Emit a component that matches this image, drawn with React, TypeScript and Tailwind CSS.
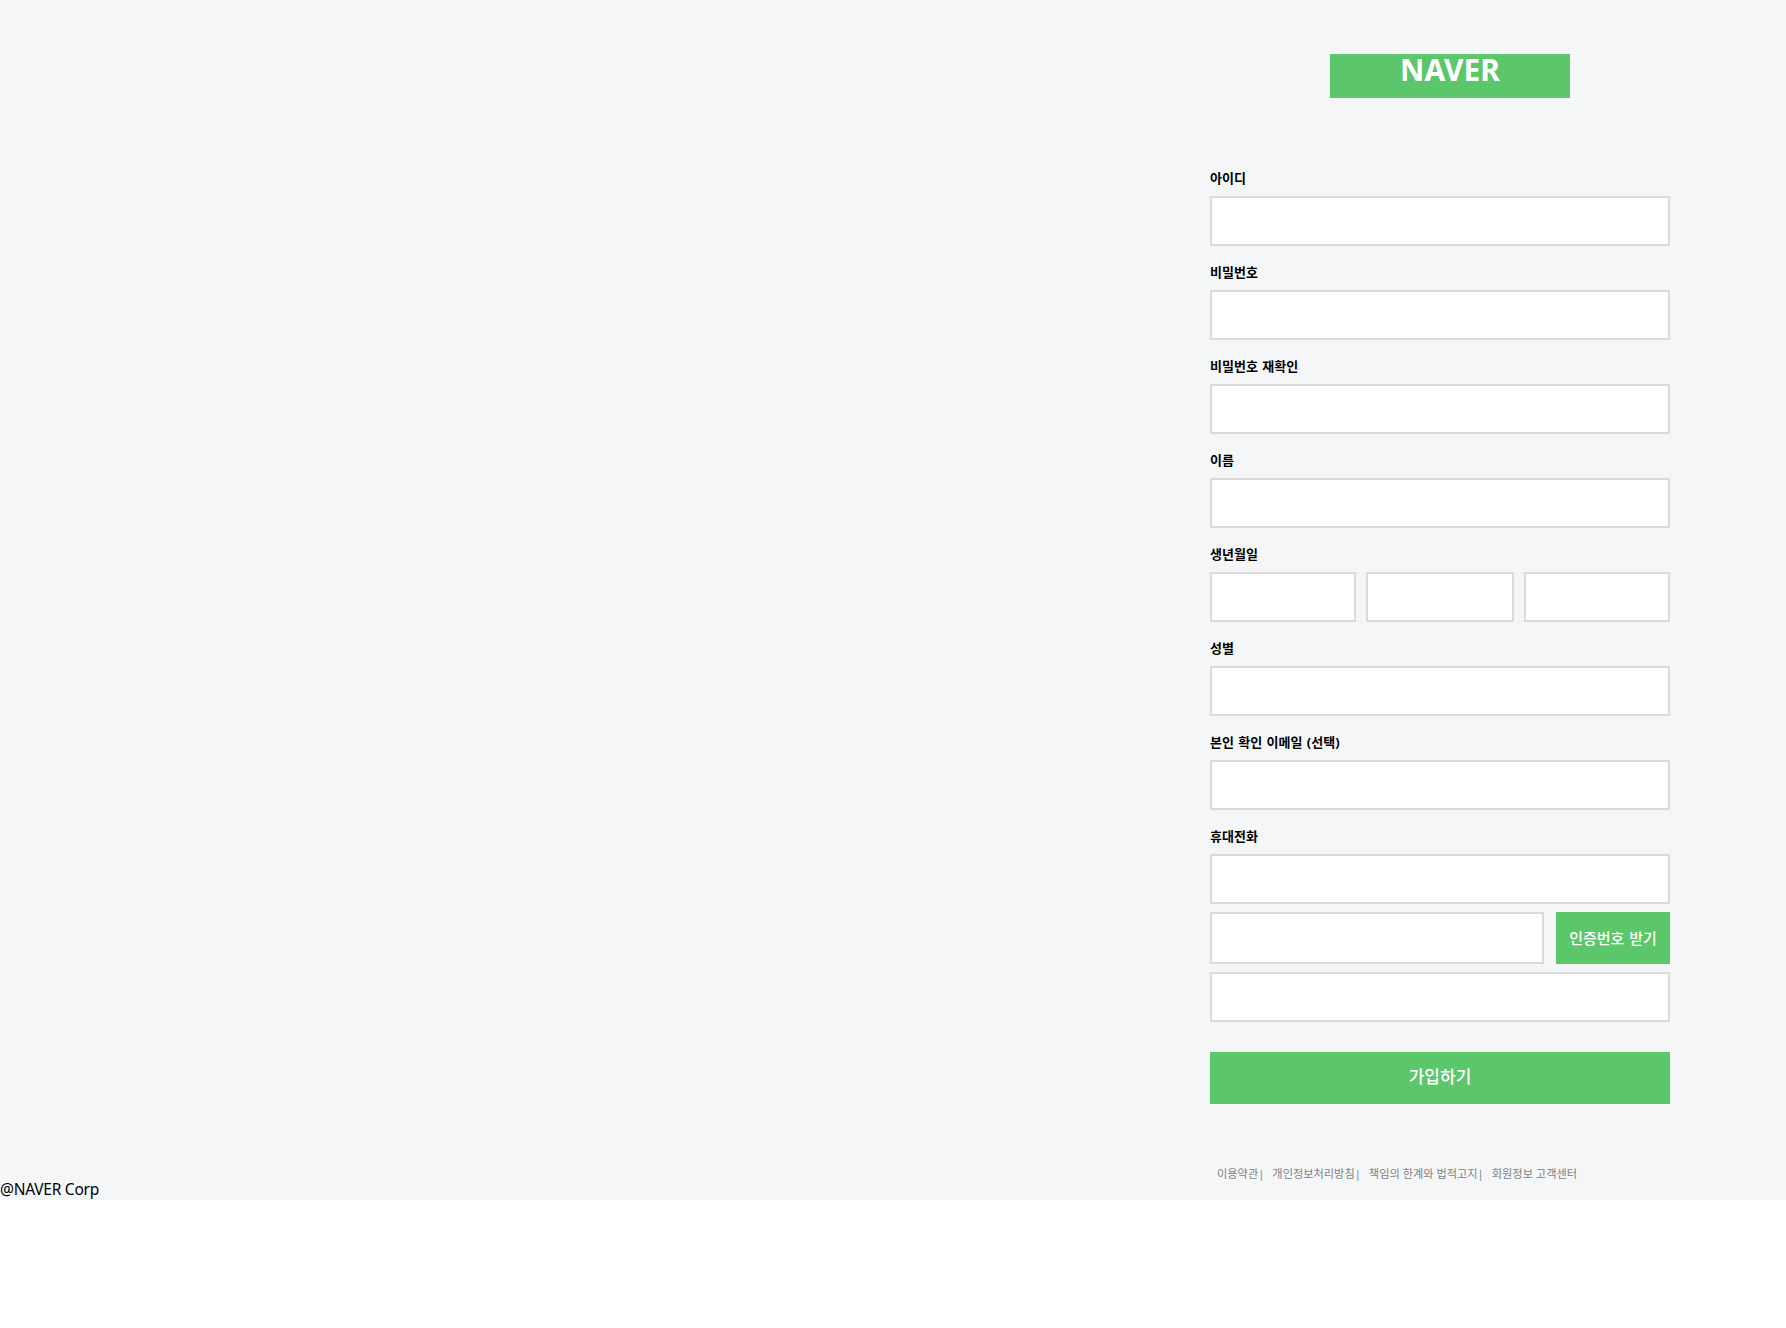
const fontClass = "font-['Noto_Sans','Noto_Sans_CJK_KR',sans-serif]"
const labelClass = 'block h-[36px] pt-[9px] text-[13px] leading-[18px] font-bold text-black [word-spacing:1px]'

function Field({ label }: { label: string }) {
  return (
    <div className="mb-[8px]">
      <label className={labelClass}>{label}</label>
      <TextInput className="w-full" />
    </div>
  )
}

function TextInput({ className = '' }: { className?: string }) {
  return <input className={`block h-[50px] min-w-0 border-2 border-[#dadada] bg-white ${className}`} />
}

const footerLinks = ['이용약관|', '개인정보처리방침|', '책임의 한계와 법적고지|', '회원정보 고객센터']

export default function App() {
  return (
    <div className={`flex h-[1200px] bg-[#f5f6f7] ${fontClass}`}>
      <div className="flex flex-1 flex-col justify-end">
        <p className="h-[22px] text-[15.5px] leading-[22px] tracking-[-0.25px] text-black">@NAVER Corp</p>
      </div>

      <div className="mr-[116px] w-[460px] pt-[54px]">
        <div className="ml-[120px] h-[44px] w-[240px] bg-[#5cc66a] text-center text-[30px] leading-[32px] font-bold text-white">
          NAVER
        </div>

        <form className="mt-[62px]" onSubmit={e => e.preventDefault()}>
          <Field label="아이디" />
          <Field label="비밀번호" />
          <Field label="비밀번호 재확인" />
          <Field label="이름" />

          <div className="mb-[8px]">
            <label className={labelClass}>생년월일</label>
            <div className="flex gap-[10px]">
              <TextInput className="w-[146px]" />
              <TextInput className="w-[148px]" />
              <TextInput className="w-[146px]" />
            </div>
          </div>

          <Field label="성별" />
          <Field label="본인 확인 이메일 (선택)" />
          <Field label="휴대전화" />

          <div className="flex gap-[12px]">
            <input className="block h-[52px] w-[334px] border-2 border-[#dadada] bg-white" />
            <button type="button" className="h-[52px] w-[114px] bg-[#5cc66a] text-[15px] font-medium text-white [word-spacing:1px]">
              인증번호 받기
            </button>
          </div>
          <TextInput className="mt-[8px] w-full" />

          <button type="button" className="mt-[30px] h-[52px] w-full bg-[#5cc66a] pb-[2px] text-[17px] font-medium text-white">
            가입하기
          </button>
        </form>

        <div className="mt-[60px] flex gap-[8px] pl-[7px] text-[11.2px] leading-[19px] text-[#808080]">
          {footerLinks.map(link => (
            <a key={link}>{link}</a>
          ))}
        </div>
      </div>
    </div>
  )
}
